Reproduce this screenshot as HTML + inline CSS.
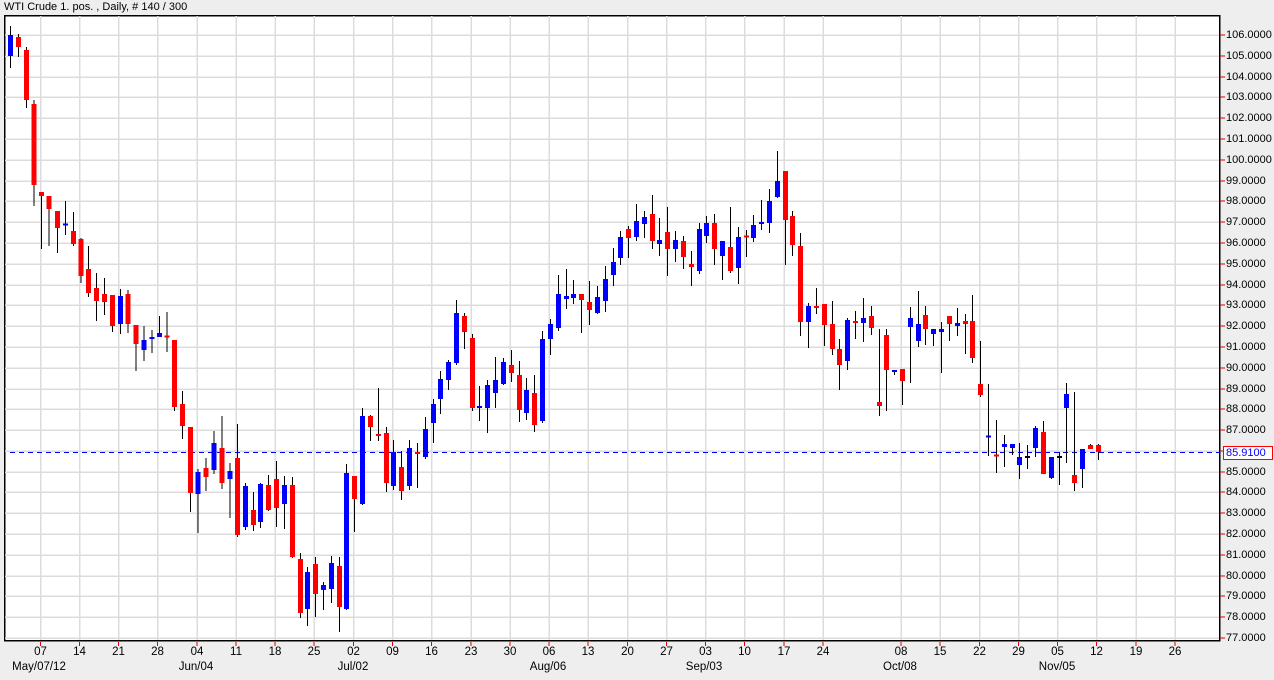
<!DOCTYPE html>
<html><head><meta charset="utf-8"><style>
html,body{margin:0;padding:0;width:1274px;height:680px;overflow:hidden;background:#eeeeee;font-family:"Liberation Sans",sans-serif;}
.t{position:absolute;font-size:11px;color:#000;white-space:nowrap;line-height:12px;}
.r{left:1226px;}
.d{top:646px;transform:translateX(-50%);font-size:11.5px;}
.m{top:661px;transform:translateX(-50%);font-size:11.5px;}
</style></head><body>
<div class="t" style="left:4px;top:1px;font-size:11px;">WTI Crude 1. pos. , Daily, # 140 / 300</div>
<svg width="1274" height="680" style="position:absolute;left:0;top:0" shape-rendering="crispEdges">
<rect x="4.5" y="15.5" width="1215" height="625" fill="#fff" stroke="#000" stroke-width="1.5"/>
<g stroke="#dcdcdc" stroke-width="1.5">
<path d="M5 35H1219M5 56H1219M5 77H1219M5 97H1219M5 118H1219M5 139H1219M5 160H1219M5 181H1219M5 201H1219M5 222H1219M5 243H1219M5 264H1219M5 285H1219M5 305H1219M5 326H1219M5 347H1219M5 368H1219M5 389H1219M5 409H1219M5 430H1219M5 451H1219M5 472H1219M5 492H1219M5 513H1219M5 534H1219M5 555H1219M5 576H1219M5 596H1219M5 617H1219M5 638H1219"/>
<path d="M40.5 16V640M79.5 16V640M118.5 16V640M157.5 16V640M197 16V640M236 16V640M275 16V640M314 16V640M353.5 16V640M392.5 16V640M431.5 16V640M471 16V640M510 16V640M549 16V640M588 16V640M627.5 16V640M666.5 16V640M705.5 16V640M744.5 16V640M784 16V640M823 16V640M901 16V640M940 16V640M979.5 16V640M1018.5 16V640M1057.5 16V640M1096.5 16V640M1136 16V640M1175 16V640"/>
</g>
<g stroke="#e00000" stroke-width="1">
<path d="M1220 35H1225M1220 56H1225M1220 77H1225M1220 97H1225M1220 118H1225M1220 139H1225M1220 160H1225M1220 181H1225M1220 201H1225M1220 222H1225M1220 243H1225M1220 264H1225M1220 285H1225M1220 305H1225M1220 326H1225M1220 347H1225M1220 368H1225M1220 389H1225M1220 409H1225M1220 430H1225M1220 451H1225M1220 472H1225M1220 492H1225M1220 513H1225M1220 534H1225M1220 555H1225M1220 576H1225M1220 596H1225M1220 617H1225M1220 638H1225"/>
<path d="M40.5 642V646M79.5 642V646M118.5 642V646M157.5 642V646M197 642V646M236 642V646M275 642V646M314 642V646M353.5 642V646M392.5 642V646M431.5 642V646M471 642V646M510 642V646M549 642V646M588 642V646M627.5 642V646M666.5 642V646M705.5 642V646M744.5 642V646M784 642V646M823 642V646M901 642V646M940 642V646M979.5 642V646M1018.5 642V646M1057.5 642V646M1096.5 642V646M1136 642V646M1175 642V646"/>
</g>
<line x1="10" y1="452.5" x2="1220" y2="452.5" stroke="#0000ff" stroke-width="1" stroke-dasharray="5,4"/>
<path stroke="#000" stroke-width="1" fill="none" d="M10.5 26V68M18.5 34V57M26.5 47V108M34 100V206M41.5 192V249M49 196V246M57.5 211V253M65.5 201V235M73.5 212V246M81 238V283M88.5 246V297M96.5 273V321M104.5 278V315M112.5 295V332M120.5 289V334M128 290V333M136 325V371M144 326V361M152 330V353M159.5 316V337M167 312V352M174.5 340V411M182.5 391V439M190.5 427V512M198 469V533M206 458V491M214 431V474M222 416V489M230 463V518M237.5 424V537M245.5 483V530M253.5 492V531M260.5 483V528M268.5 475V511M276.5 461V527M284.5 476V529M292.5 477V558M300.5 553V618M307.5 567V626M315.5 557V617M323.5 582V610M331.5 556V603M339.5 557V632M346.5 464V610M354.5 476V532M362.5 408V505M370.5 415V441M378.5 388V441M386.5 427V492M393.5 440V490M401.5 451V500M409.5 440V490M417.5 443V488M425.5 417V459M433.5 399V443M440.5 371V414M448.5 360V390M456.5 300V365M464.5 313V349M472.5 334V411M479.5 386V421M487.5 380V433M495.5 357V408M503.5 358V385M511.5 350V382M519.5 361V422M526.5 378V420M534.5 375V432M542.5 331V423M550.5 319V355M558.5 275V331M566.5 269V309M573.5 280V304M581.5 294V333M589.5 281V325M597.5 286V314M605.5 266V312M613.5 248V286M620.5 231V265M628.5 226V258M636.5 204V241M644.5 211V238M652.5 195V249M659.5 218V256M667.5 207V276M675.5 231V262M683.5 236V269M691.5 251V286M699.5 223V274M706.5 216V243M714.5 214V265M722.5 241V280M730.5 207V273M738.5 227V284M746.5 230V257M753.5 215V242M761.5 200V230M769.5 189V233M777.5 151V198M785.5 171V265M792.5 211V256M800.5 233V336M808.5 303V348M816.5 288V314M824.5 304V346M832.5 301V355M839.5 339V390M847.5 318V370M855.5 311V339M863.5 298V342M871.5 306V335M879.5 329V416M886.5 329V411M894.5 370V375M902.5 369V405M910.5 307V383M918.5 291V347M925.5 306V345M933.5 329V346M941.5 322V373M949.5 316V341M957.5 308V336M965.5 314V354M972.5 295V363M980.5 341V397M988.5 384V456M996.5 420V473M1004.5 435V467M1012.5 444V455M1019.5 443V479M1027.5 445V469M1035.5 426V457M1043.5 421V474M1051.5 457V479M1059.5 452V485M1066.5 383V463M1074.5 392V491M1082.5 449V488M1090.5 444V449M1098.5 444V460"/>
<path fill="#000" d="M1025 456H1030V458H1025zM1057 456H1062V458H1057z"/>
<path fill="#ff0000" d="M16 37H21V47H16zM24 50H29V100H24zM31.5 104H36.5V185H31.5zM39 192H44V196H39zM46.5 196H51.5V209H46.5zM55 211H60V228H55zM71 231H76V244H71zM78.5 239H83.5V276H78.5zM86 269H91V293H86zM94 288H99V301H94zM102 294H107V302H102zM110 295H115V326H110zM125.5 294H130.5V324H125.5zM133.5 325H138.5V344H133.5zM164.5 335.5H169.5V337.5H164.5zM172 340H177V407H172zM180 404H185V426H180zM188 427H193V493H188zM203.5 468H208.5V477H203.5zM219.5 448H224.5V483H219.5zM235 458H240V535H235zM251 510H256V525H251zM266 485H271V510H266zM274 479H279V508H274zM290 485H295V557H290zM298 559H303V613H298zM313 564H318V594H313zM337 566H342V607H337zM352 476H357V499H352zM368 416H373V427H368zM376 434H381V436H376zM384 433H389V483H384zM399 467H404V491H399zM415 452H420V454H415zM462 316H467V332H462zM470 338H475V408H470zM509 365H514V373H509zM517 375H522V410H517zM532 393H537V425H532zM579 294H584V300H579zM587 302H592V310H587zM626 229H631V238H626zM650 214H655V241H650zM665 232H670V249H665zM681 241H686V257H681zM689 264H694V267H689zM712 223H717V249H712zM728 247H733V271H728zM744 235.5H749V237.5H744zM783 171H788V220H783zM790 216H795V245H790zM798 246H803V322H798zM814 306H819V308H814zM822 304H827V325H822zM830 324H835V349H830zM837 349H842V365H837zM853 321H858V323H853zM869 316H874V328H869zM877 402H882V406H877zM884 335H889V370H884zM900 369H905V381H900zM923 315H928V329H923zM947 316H952V324H947zM963 321H968V324H963zM970 321H975V358H970zM978 384H983V395H978zM994 454.5H999V456.5H994zM1041 432H1046V474H1041zM1072 475H1077V483H1072zM1088 445H1093V449H1088zM1096 445H1101V452H1096z"/>
<path fill="#0000ff" d="M8 35H13V56H8zM63 223.5H68V225.5H63zM118 296H123V324H118zM141.5 340H146.5V350H141.5zM149.5 337H154.5V339H149.5zM157 333H162V337H157zM195.5 472H200.5V494H195.5zM211.5 443H216.5V470H211.5zM227.5 471H232.5V479H227.5zM243 486H248V527H243zM258 484H263V522H258zM282 485H287V504H282zM305 572H310V609H305zM321 585H326V590H321zM329 563H334V589H329zM344 473H349V609H344zM360 416H365V504H360zM391 452H396V486H391zM407 448H412V486H407zM423 429H428V457H423zM431 404H436V423H431zM438 379H443V399H438zM446 362H451V380H446zM454 313H459V363H454zM477 406H482V408H477zM485 385H490V408H485zM493 380H498V393H493zM501 362H506V384H501zM524 390H529V413H524zM540 339H545V421H540zM548 324H553V339H548zM556 294H561V328H556zM564 296H569V299H564zM571 294H576V298H571zM595 297H600V313H595zM603 279H608V301H603zM611 262H616V275H611zM618 237H623V258H618zM634 221H639V237H634zM642 217H647V224H642zM657 240H662V244H657zM673 240H678V249H673zM697 229H702V271H697zM704 223H709V236H704zM720 241H725V256H720zM736 237H741V268H736zM751 225H756V238H751zM759 222H764V224H759zM767 201H772V223H767zM775 181H780V197H775zM806 306H811V322H806zM845 320H850V361H845zM861 318H866V323H861zM892 370H897V372H892zM908 318H913V327H908zM916 324H921V341H916zM931 329H936V334H931zM939 329H944V332H939zM955 323H960V326H955zM986 435.5H991V437.5H986zM1002 444H1007V447H1002zM1010 444H1015V448H1010zM1017 457H1022V465H1017zM1033 428H1038V448H1033zM1049 457H1054V478H1049zM1064 394H1069V408H1064zM1080 449H1085V469H1080z"/>
<rect x="1223.5" y="446.5" width="49" height="13" fill="#fff" stroke="#ff0000" stroke-width="1"/>
</svg>
<div class="t r" style="top:29px">106.0000</div>
<div class="t r" style="top:50px">105.0000</div>
<div class="t r" style="top:71px">104.0000</div>
<div class="t r" style="top:91px">103.0000</div>
<div class="t r" style="top:112px">102.0000</div>
<div class="t r" style="top:133px">101.0000</div>
<div class="t r" style="top:154px">100.0000</div>
<div class="t r" style="top:175px">99.0000</div>
<div class="t r" style="top:195px">98.0000</div>
<div class="t r" style="top:216px">97.0000</div>
<div class="t r" style="top:237px">96.0000</div>
<div class="t r" style="top:258px">95.0000</div>
<div class="t r" style="top:279px">94.0000</div>
<div class="t r" style="top:299px">93.0000</div>
<div class="t r" style="top:320px">92.0000</div>
<div class="t r" style="top:341px">91.0000</div>
<div class="t r" style="top:362px">90.0000</div>
<div class="t r" style="top:383px">89.0000</div>
<div class="t r" style="top:403px">88.0000</div>
<div class="t r" style="top:424px">87.0000</div>
<div class="t r" style="top:447px;color:#0000ff">85.9100</div>
<div class="t r" style="top:466px">85.0000</div>
<div class="t r" style="top:486px">84.0000</div>
<div class="t r" style="top:507px">83.0000</div>
<div class="t r" style="top:528px">82.0000</div>
<div class="t r" style="top:549px">81.0000</div>
<div class="t r" style="top:570px">80.0000</div>
<div class="t r" style="top:590px">79.0000</div>
<div class="t r" style="top:611px">78.0000</div>
<div class="t r" style="top:632px">77.0000</div>
<div class="t d" style="left:40.5px">07</div>
<div class="t d" style="left:79.5px">14</div>
<div class="t d" style="left:118.5px">21</div>
<div class="t d" style="left:157.5px">28</div>
<div class="t d" style="left:197px">04</div>
<div class="t d" style="left:236px">11</div>
<div class="t d" style="left:275px">18</div>
<div class="t d" style="left:314px">25</div>
<div class="t d" style="left:353.5px">02</div>
<div class="t d" style="left:392.5px">09</div>
<div class="t d" style="left:431.5px">16</div>
<div class="t d" style="left:471px">23</div>
<div class="t d" style="left:510px">30</div>
<div class="t d" style="left:549px">06</div>
<div class="t d" style="left:588px">13</div>
<div class="t d" style="left:627.5px">20</div>
<div class="t d" style="left:666.5px">27</div>
<div class="t d" style="left:705.5px">03</div>
<div class="t d" style="left:744.5px">10</div>
<div class="t d" style="left:784px">17</div>
<div class="t d" style="left:823px">24</div>
<div class="t d" style="left:901px">08</div>
<div class="t d" style="left:940px">15</div>
<div class="t d" style="left:979.5px">22</div>
<div class="t d" style="left:1018.5px">29</div>
<div class="t d" style="left:1057.5px">05</div>
<div class="t d" style="left:1096.5px">12</div>
<div class="t d" style="left:1136px">19</div>
<div class="t d" style="left:1175px">26</div>
<div class="t m" style="left:39px">May/07/12</div>
<div class="t m" style="left:196px">Jun/04</div>
<div class="t m" style="left:353px">Jul/02</div>
<div class="t m" style="left:548px">Aug/06</div>
<div class="t m" style="left:704px">Sep/03</div>
<div class="t m" style="left:900px">Oct/08</div>
<div class="t m" style="left:1057px">Nov/05</div>
</body></html>
